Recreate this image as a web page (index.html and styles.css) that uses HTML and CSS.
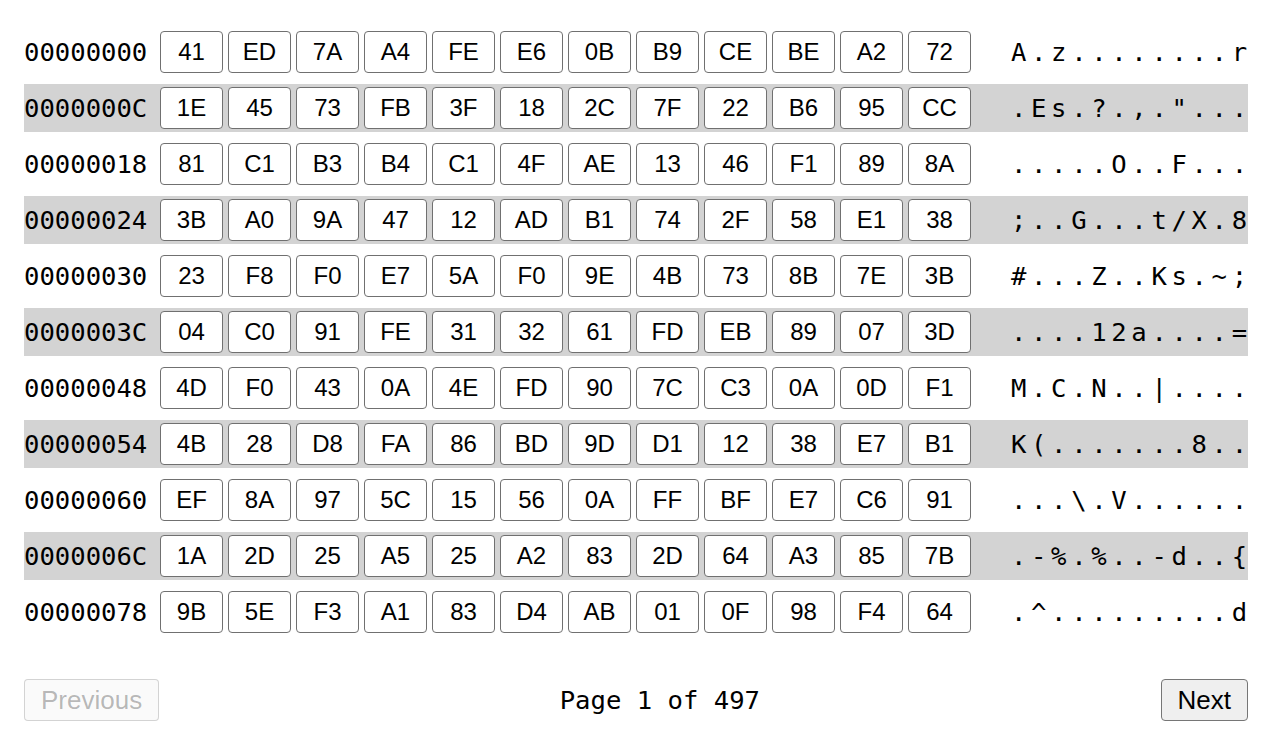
FILE: index.html
```html
<!DOCTYPE html>
<html>
<head>
<meta charset="utf-8">
<link rel="stylesheet" href="styles.css">
</head>
<body>
<div class="viewer">
  <div class="rows">
    <div class="row"><span class="off">00000000</span><div class="bytes"><span class="b">41</span><span class="b">ED</span><span class="b">7A</span><span class="b">A4</span><span class="b">FE</span><span class="b">E6</span><span class="b">0B</span><span class="b">B9</span><span class="b">CE</span><span class="b">BE</span><span class="b">A2</span><span class="b">72</span></div><span class="asc">A.z........r</span></div>
    <div class="row"><span class="off">0000000C</span><div class="bytes"><span class="b">1E</span><span class="b">45</span><span class="b">73</span><span class="b">FB</span><span class="b">3F</span><span class="b">18</span><span class="b">2C</span><span class="b">7F</span><span class="b">22</span><span class="b">B6</span><span class="b">95</span><span class="b">CC</span></div><span class="asc">.Es.?.,."...</span></div>
    <div class="row"><span class="off">00000018</span><div class="bytes"><span class="b">81</span><span class="b">C1</span><span class="b">B3</span><span class="b">B4</span><span class="b">C1</span><span class="b">4F</span><span class="b">AE</span><span class="b">13</span><span class="b">46</span><span class="b">F1</span><span class="b">89</span><span class="b">8A</span></div><span class="asc">.....O..F...</span></div>
    <div class="row"><span class="off">00000024</span><div class="bytes"><span class="b">3B</span><span class="b">A0</span><span class="b">9A</span><span class="b">47</span><span class="b">12</span><span class="b">AD</span><span class="b">B1</span><span class="b">74</span><span class="b">2F</span><span class="b">58</span><span class="b">E1</span><span class="b">38</span></div><span class="asc">;..G...t/X.8</span></div>
    <div class="row"><span class="off">00000030</span><div class="bytes"><span class="b">23</span><span class="b">F8</span><span class="b">F0</span><span class="b">E7</span><span class="b">5A</span><span class="b">F0</span><span class="b">9E</span><span class="b">4B</span><span class="b">73</span><span class="b">8B</span><span class="b">7E</span><span class="b">3B</span></div><span class="asc">#...Z..Ks.~;</span></div>
    <div class="row"><span class="off">0000003C</span><div class="bytes"><span class="b">04</span><span class="b">C0</span><span class="b">91</span><span class="b">FE</span><span class="b">31</span><span class="b">32</span><span class="b">61</span><span class="b">FD</span><span class="b">EB</span><span class="b">89</span><span class="b">07</span><span class="b">3D</span></div><span class="asc">....12a....=</span></div>
    <div class="row"><span class="off">00000048</span><div class="bytes"><span class="b">4D</span><span class="b">F0</span><span class="b">43</span><span class="b">0A</span><span class="b">4E</span><span class="b">FD</span><span class="b">90</span><span class="b">7C</span><span class="b">C3</span><span class="b">0A</span><span class="b">0D</span><span class="b">F1</span></div><span class="asc">M.C.N..|....</span></div>
    <div class="row"><span class="off">00000054</span><div class="bytes"><span class="b">4B</span><span class="b">28</span><span class="b">D8</span><span class="b">FA</span><span class="b">86</span><span class="b">BD</span><span class="b">9D</span><span class="b">D1</span><span class="b">12</span><span class="b">38</span><span class="b">E7</span><span class="b">B1</span></div><span class="asc">K(.......8..</span></div>
    <div class="row"><span class="off">00000060</span><div class="bytes"><span class="b">EF</span><span class="b">8A</span><span class="b">97</span><span class="b">5C</span><span class="b">15</span><span class="b">56</span><span class="b">0A</span><span class="b">FF</span><span class="b">BF</span><span class="b">E7</span><span class="b">C6</span><span class="b">91</span></div><span class="asc">...\.V......</span></div>
    <div class="row"><span class="off">0000006C</span><div class="bytes"><span class="b">1A</span><span class="b">2D</span><span class="b">25</span><span class="b">A5</span><span class="b">25</span><span class="b">A2</span><span class="b">83</span><span class="b">2D</span><span class="b">64</span><span class="b">A3</span><span class="b">85</span><span class="b">7B</span></div><span class="asc">.-%.%..-d..{</span></div>
    <div class="row"><span class="off">00000078</span><div class="bytes"><span class="b">9B</span><span class="b">5E</span><span class="b">F3</span><span class="b">A1</span><span class="b">83</span><span class="b">D4</span><span class="b">AB</span><span class="b">01</span><span class="b">0F</span><span class="b">98</span><span class="b">F4</span><span class="b">64</span></div><span class="asc">.^.........d</span></div>
  </div>
  <div class="pager">
    <button class="btn" disabled>Previous</button>
    <span class="page">Page 1 of 497</span>
    <button class="btn">Next</button>
  </div>
</div>
</body>
</html>
```

FILE: styles.css
```css
html, body {
  margin: 0;
  padding: 0;
  background: #fff;
}

.viewer {
  width: 1224px;
  margin-left: 24px;
  padding-top: 28px;
}

.rows {
  display: flex;
  flex-direction: column;
  gap: 8px;
}

.row {
  display: flex;
  align-items: center;
  height: 48px;
}

.row:nth-child(even) {
  background: #d3d3d3;
}

.off {
  flex: 0 0 136px;
  font-family: "DejaVu Sans Mono", monospace;
  font-size: 25.6px;
  color: #000;
}

.bytes {
  display: flex;
  gap: 5px;
}

.b {
  box-sizing: border-box;
  width: 63px;
  height: 42px;
  display: flex;
  align-items: center;
  justify-content: center;
  border: 1px solid #707070;
  border-radius: 4px;
  background: #fff;
  font-family: "Liberation Sans", Arial, sans-serif;
  font-size: 24px;
  color: #000;
}

.asc {
  margin-left: 40px;
  font-family: "DejaVu Sans Mono", monospace;
  font-size: 25.6px;
  letter-spacing: 4.65px;
  color: #000;
  white-space: pre;
}

.pager {
  display: flex;
  justify-content: space-between;
  align-items: center;
  margin-top: 43px;
}

.btn {
  box-sizing: border-box;
  height: 42px;
  padding: 0 16px;
  font-family: "Liberation Sans", Arial, sans-serif;
  font-size: 26px;
  color: #000;
  background: #efefef;
  border: 1px solid #767676;
  border-radius: 4px;
}

.btn:disabled {
  color: rgba(16, 16, 16, 0.3);
  background: rgba(239, 239, 239, 0.3);
  border-color: rgba(118, 118, 118, 0.3);
}

.page {
  font-family: "DejaVu Sans Mono", monospace;
  font-size: 25.6px;
  color: #000;
}
```
